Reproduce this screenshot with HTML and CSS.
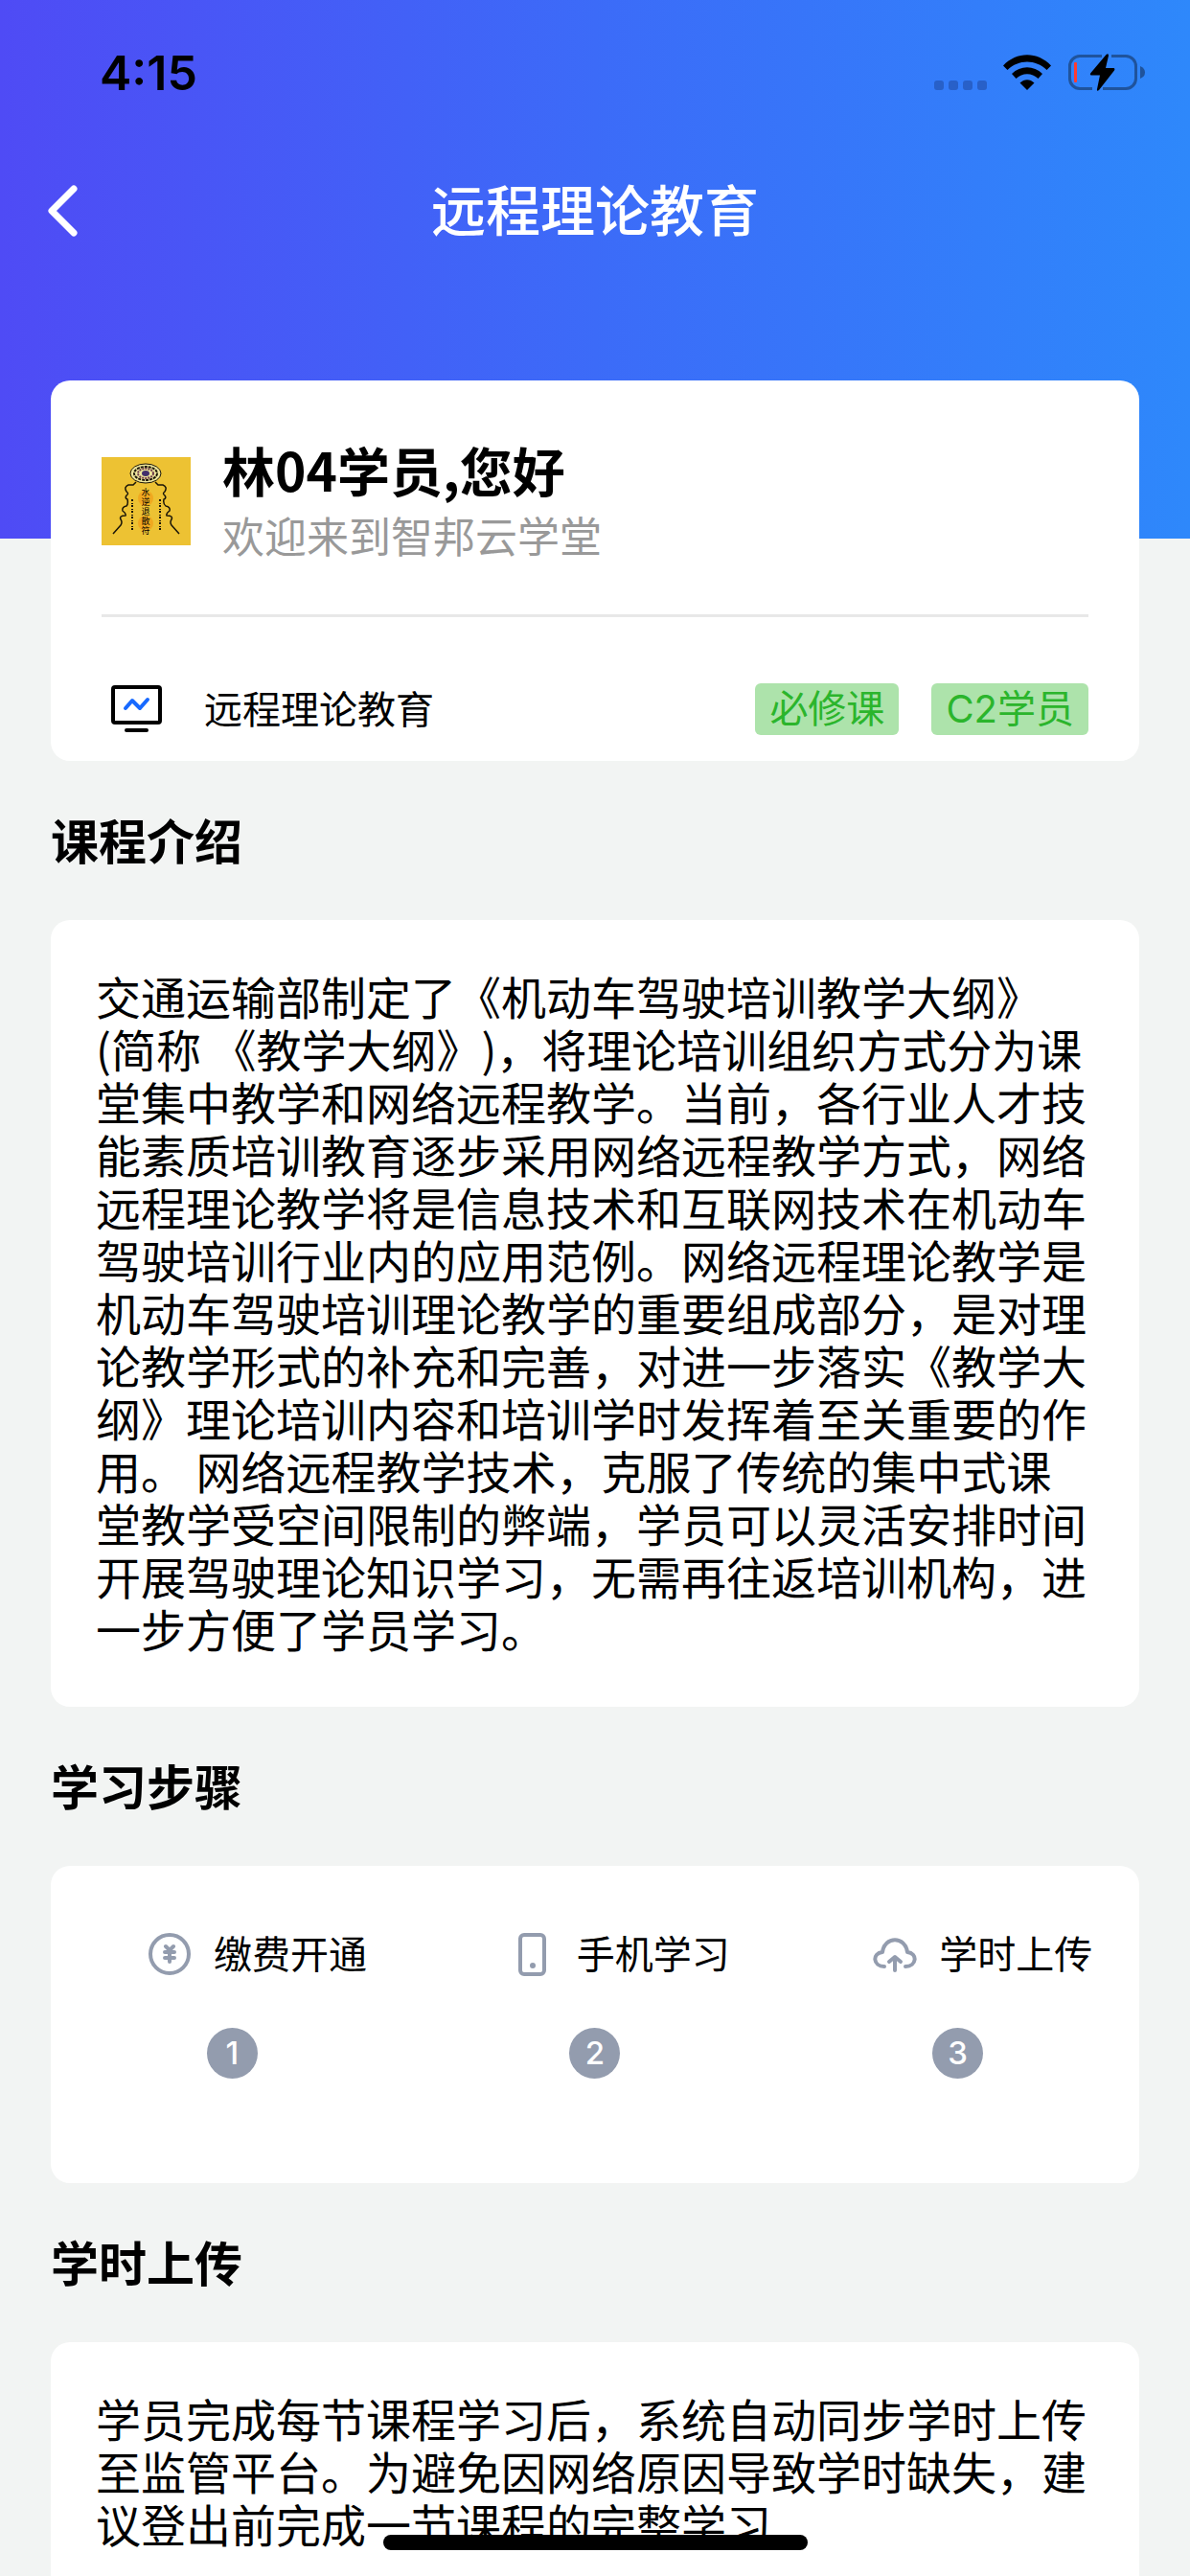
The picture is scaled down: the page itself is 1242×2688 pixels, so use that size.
FILE: index.html
```
<!DOCTYPE html>
<html lang="zh-CN">
<head>
  <meta charset="UTF-8" />
  <meta name="viewport" content="width=device-width, initial-scale=1.0"/>
  <title>远程理论教育</title>
  <link rel="stylesheet" href="styles.css">
</head>
<body>

  <div class="page">
    <header class="header">
      <div class="status-bar">
        <span class="time">4:15</span>
        <div class="status-icons">
          <div class="dots"><i></i><i></i><i></i><i></i></div>
          <svg class="wifi" viewBox="0 0 50 38" width="50" height="38">
            <path d="M0 11.5C14-3.500 36-3.500 50 11.500L45.500 16C34 4.500 16 4.500 4.500 16Z"/>
            <path d="M9 20C18 11 32 11 41 20L36.500 25C30 18.500 20 18.500 13.500 25Z"/>
            <path d="M17.500 29.500C22 25 28 25 32.500 29.500L25 37Z"/>
          </svg>
          <svg class="battery" viewBox="0 0 82 40" width="82" height="40">
            <path class="shell" d="M36 2.500H13A10.500 10.500 0 0 0 2.500 13V26A10.500 10.500 0 0 0 13 36.500H26M46 2.500H61A10.500 10.500 0 0 1 71.500 13V26A10.500 10.500 0 0 1 61 36.500H37"/>
            <path class="tip" d="M76 13Q81 15 81 19.500T76 26Z"/>
            <rect class="level" x="7" y="9" width="3" height="21" rx="1"/>
            <path d="M40.500 1Q43-1 43 2L40 15H48.500Q50 15.500 49 17.500L33 38Q30.500 40 31 37L34 22.500H25Q23 22 24.500 20Z"/>
          </svg>
        </div>
      </div>
      <nav class="nav">
        <button class="back" type="button" aria-label="返回">
          <svg viewBox="0 0 34 56" width="34" height="56"><path d="M29 5L6 28L29 51"/></svg>
        </button>
        <h1 class="nav-title">远程理论教育</h1>
      </nav>
    </header>

    <main class="content">
      <section class="card profile">
        <div class="user">
          <svg class="avatar" viewBox="0 0 93 92" width="93" height="92">
            <rect width="93" height="92" fill="#edc233"/>
            <circle cx="46" cy="43" r="8" fill="#f0a81f"/>
            <circle cx="46" cy="69" r="8" fill="#f0a81f"/>
            <g fill="none" stroke="#1b1608">
              <ellipse cx="46" cy="17" rx="16" ry="10" fill="#efe79c"/>
              <ellipse cx="46" cy="17" rx="12" ry="7" stroke-width="2" stroke-dasharray="3 1"/>
              <ellipse cx="46" cy="17" rx="8" ry="5" stroke="#6d3b4a" stroke-width="2" stroke-dasharray="2 1"/>
              <path stroke-width="1.500" d="M36 26L33 29H28Q23 31 26 36Q29 38 26 40Q24 43 27 44Q28 49 26 51Q21 52 22 56Q26 59 25 61Q18 61 20 65Q22 68 20 71L12 80"/>
              <path stroke-width="1.500" d="M56 26L59 29H64Q69 31 66 36Q63 38 66 40Q68 43 65 44Q64 49 67 51Q72 52 71 56Q67 59 68 61Q75 61 73 65Q71 68 73 71L81 80"/>
              <path stroke-width="2" stroke-dasharray="2 2 1 1" d="M32 44V77M61 44V77"/>
            </g>
            <ellipse cx="46" cy="17" rx="4" ry="3" fill="#43306b"/>
            <g class="charm">
              <text x="46" y="40">水</text>
              <text x="46" y="50">逆</text>
              <text x="46" y="60">退</text>
              <text x="46" y="70">散</text>
              <text x="46" y="80">符</text>
            </g>
          </svg>
          <div class="user-text">
            <h2 class="user-name">林04学员,您好</h2>
            <p class="user-welcome">欢迎来到智邦云学堂</p>
          </div>
        </div>
        <div class="course">
          <svg class="monitor" viewBox="0 0 53 50" width="53" height="50">
            <rect x="2" y="2" width="49" height="37" rx="2"/>
            <path d="M16 47H37"/>
            <path class="wave" d="M15 24L22 16L30 24L38 15"/>
          </svg>
          <span class="course-name">远程理论教育</span>
          <span class="tag">必修课</span>
          <span class="tag">C2学员</span>
        </div>
      </section>

      <h2 class="section-title">课程介绍</h2>
      <section class="card text">
        <p>交通运输部制定了《机动车驾驶培训教学大纲》(简称 《教学大纲》)，将理论培训组织方式分为课堂集中教学和网络远程教学。当前，各行业人才技能素质培训教育逐步采用网络远程教学方式，网络远程理论教学将是信息技术和互联网技术在机动车驾驶培训行业内的应用范例。网络远程理论教学是机动车驾驶培训理论教学的重要组成部分，是对理论教学形式的补充和完善，对进一步落实《教学大纲》理论培训内容和培训学时发挥着至关重要的作用。 网络远程教学技术，克服了传统的集中式课堂教学受空间限制的弊端，学员可以灵活安排时间开展驾驶理论知识学习，无需再往返培训机构，进一步方便了学员学习。</p>
      </section>

      <h2 class="section-title">学习步骤</h2>
      <section class="card steps">
        <div class="step">
          <div class="step-name">
            <svg viewBox="0 0 56 56" width="56" height="56">
              <circle cx="28" cy="28" r="20"/>
              <path d="M24 20L28 24L32 20M28 24V36M23 26H33M23 32H33"/>
            </svg>
            <span>缴费开通</span>
          </div>
          <span class="step-num">1</span>
        </div>
        <div class="step">
          <div class="step-name">
            <svg viewBox="0 0 56 56" width="56" height="56">
              <rect x="15" y="8" width="25" height="41" rx="4"/>
              <circle class="dot" cx="28" cy="40" r="3"/>
            </svg>
            <span>手机学习</span>
          </div>
          <span class="step-num">2</span>
        </div>
        <div class="step">
          <div class="step-name">
            <svg viewBox="0 0 56 56" width="56" height="56">
              <path d="M17 41C5 41 4 27 15 26C17 9 39 9 41 26C52 27 51 41 39 41"/>
              <path d="M28 45V31M22 36L28 31L34 36"/>
            </svg>
            <span>学时上传</span>
          </div>
          <span class="step-num">3</span>
        </div>
      </section>

      <h2 class="section-title">学时上传</h2>
      <section class="card text">
        <p>学员完成每节课程学习后，系统自动同步学时上传至监管平台。为避免因网络原因导致学时缺失，建议登出前完成一节课程的完整学习</p>
      </section>
    </main>
  </div>

  <div class="home-indicator"></div>

</body>
</html>
```
FILE: styles.css
```
* {
    box-sizing: border-box;
}
body {
    margin: 0;
    background: #f2f4f3;
    font-family: "Noto Sans CJK SC", sans-serif;
    text-spacing-trim: space-all;
    color: #000;
}
h1, h2, p {
    margin: 0;
}
.page {
    height: 100vh;
    overflow-y: auto;
    scrollbar-width: none;
}

/* header */
.header {
    height: 562px;
    background: linear-gradient(90deg, #4f4bf5, #3c6bf8 50%, #2e88fb);
}
.status-bar {
    display: flex;
    justify-content: space-between;
    align-items: center;
    height: 132px;
    padding: 20px 46px 0 104px;
}
.time {
    font-family: Inter, sans-serif;
    font-size: 50px;
    font-weight: 600;
    line-height: 56px;
}
.status-icons {
    display: flex;
    align-items: center;
    gap: 17px;
}
.dots {
    display: flex;
    gap: 5px;
    padding-top: 26px;
}
.dots i {
    width: 10px;
    height: 10px;
    border-radius: 3px;
    background: #2860c8;
}
.battery .shell {
    fill: none;
    stroke: #1f539c;
    stroke-width: 3;
}
.battery .tip {
    fill: #1f539c;
}
.battery .level {
    fill: #ff3b30;
}
.nav {
    display: grid;
    grid-template-columns: 120px 1fr 120px;
    align-items: center;
    height: 175px;
}
.back {
    display: flex;
    justify-self: start;
    margin-left: 48px;
    padding: 0;
    border: 0;
    background: none;
}
.back path {
    fill: none;
    stroke: #fff;
    stroke-width: 7;
    stroke-linecap: round;
    stroke-linejoin: round;
}
.nav-title {
    padding-bottom: 8px;
    font-size: 57px;
    font-weight: 500;
    line-height: 80px;
    text-align: center;
    color: #fff;
}

/* cards */
.content {
    position: relative;
    margin-top: -165px;
    padding: 0 53px 53px;
}
.card {
    border-radius: 20px;
    background: #fff;
}
.section-title {
    padding-bottom: 4px;
    font-size: 50px;
    font-weight: 700;
    line-height: 162px;
}
.text {
    padding: 51px 47px 55px;
    font-size: 47px;
    line-height: 55px;
}

/* profile */
.profile {
    padding: 0 53px;
}
.user {
    display: flex;
    align-items: center;
    gap: 33px;
    padding: 54px 0 46px;
    border-bottom: 3px solid #e8e8e8;
}
.charm {
    font-size: 9px;
    text-anchor: middle;
}
.user-text {
    padding-bottom: 6px;
}
.user-name {
    font-size: 55px;
    font-weight: 700;
    line-height: 76px;
}
.user-welcome {
    font-size: 44px;
    line-height: 62px;
    color: #999;
}
.course {
    display: flex;
    align-items: center;
    gap: 34px;
    padding: 69px 0 27px;
    font-size: 40px;
    line-height: 54px;
}
.monitor {
    margin: 0 10px;
    fill: none;
    stroke: #000;
    stroke-width: 4;
    stroke-linecap: round;
}
.monitor .wave {
    stroke: #1769ff;
    stroke-linejoin: round;
}
.course-name {
    flex: 1;
    padding-bottom: 4px;
    line-height: 50px;
}
.tag {
    padding: 0 15px;
    border-radius: 6px;
    background: #ade3ab;
    color: #2bb52c;
    font-family: Inter, "Noto Sans CJK SC", sans-serif;
}

/* steps */
.steps {
    display: grid;
    grid-template-columns: repeat(3, 1fr);
    padding: 64px 0 109px;
}
.step {
    display: flex;
    flex-direction: column;
    align-items: center;
    gap: 49px;
}
.step-name {
    display: flex;
    align-items: center;
    align-self: flex-start;
    gap: 18px;
    margin-left: 96px;
    font-size: 40px;
    line-height: 52px;
    white-space: nowrap;
}
.step-name span {
    padding-bottom: 4px;
}
.step-name svg {
    fill: none;
    stroke: #939cae;
    stroke-width: 4;
    stroke-linecap: round;
    stroke-linejoin: round;
}
.step-name .dot {
    fill: #939cae;
    stroke: none;
}
.step-num {
    width: 53px;
    height: 53px;
    border-radius: 50%;
    background: #939cae;
    color: #fff;
    font-family: Inter, sans-serif;
    font-size: 33px;
    font-weight: 500;
    line-height: 53px;
    text-align: center;
}

.home-indicator {
    position: fixed;
    left: 50%;
    bottom: 27px;
    width: 443px;
    height: 16px;
    margin-left: -221px;
    border-radius: 8px;
    background: #000;
}
```
